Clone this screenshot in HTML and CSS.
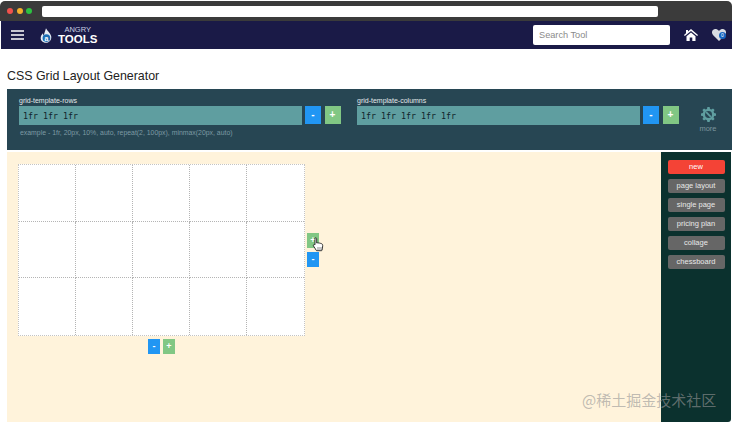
FILE: index.html
```html
<!DOCTYPE html>
<html lang="en">
<head>
<meta charset="utf-8">
<title>CSS Grid Layout Generator</title>
<link rel="stylesheet" href="styles.css">
</head>
<body>
<div class="window">
  <div class="chrome">
    <div class="dots"><span class="dot dot-red"></span><span class="dot dot-yellow"></span><span class="dot dot-green"></span></div>
    <div class="url"></div>
  </div>
  <nav class="nav">
    <svg class="burger" width="13" height="10" viewBox="0 0 13 10"><path d="M0 1h13M0 5h13M0 9h13" stroke="#fff" stroke-width="1.5"/></svg>
    <svg class="logo" width="12" height="15" viewBox="0 0 14 17">
      <path d="M7 0c1 3 5 5 6 9 1 4-2 8-6 8s-7-3-6-7c.5-2 1.500-3 2.500-4 0 1.500.5 2 1 2.500C5 6 6 3 7 0z" fill="#e8eef5"/>
      <circle cx="7.500" cy="11.500" r="4.500" fill="#1f6fb5"/>
      <text x="7.500" y="14.500" class="logo-a" text-anchor="middle">a</text>
    </svg>
    <div class="brand"><span class="brand-top">ANGRY</span><span class="brand-main">TOOLS</span></div>
    <div class="nav-right">
      <input class="search" type="text" placeholder="Search Tool">
      <svg class="home" width="14" height="12" viewBox="0 0 14 12"><path d="M7 0l7 6-.8 1L7 2 .8 7 0 6l2-1.700V1h2v1.600zM2.500 7.200L7 3.400l4.500 3.800V12H8.300V8.500H5.700V12H2.500z" fill="#fff"/></svg>
      <span class="heart-wrap">
        <svg width="14" height="12" viewBox="0 0 14 12"><path d="M7 12L1.200 6.200C-.4 4.500-.4 2.200 1 1 2.500-.4 5-.3 7 2c2-2.300 4.500-2.400 6-1 1.400 1.200 1.400 3.500-.2 5.200z" fill="#d9dde3"/></svg>
        <span class="badge">0</span>
      </span>
    </div>
  </nav>
  <main class="page">
    <h1 class="title">CSS Grid Layout Generator</h1>
    <section class="panel">
      <div class="field">
        <label class="label">grid-template-rows</label>
        <div class="input-row">
          <input class="track-input" type="text" value="1fr 1fr 1fr">
          <button class="btn btn-minus">-</button>
          <button class="btn btn-plus">+</button>
        </div>
        <p class="hint">example - 1fr, 20px, 10%, auto, repeat(2, 100px), minmax(20px, auto)</p>
      </div>
      <div class="field">
        <label class="label">grid-template-columns</label>
        <div class="input-row">
          <input class="track-input" type="text" value="1fr 1fr 1fr 1fr 1fr">
          <button class="btn btn-minus">-</button>
          <button class="btn btn-plus">+</button>
        </div>
      </div>
      <div class="more">
        <svg width="15" height="15" viewBox="0 0 16 16">
          <path d="M6.800 0h2.400l.4 2 1.500.6 1.700-1.100 1.700 1.700-1.100 1.700.6 1.500 2 .4v2.400l-2 .4-.6 1.500 1.100 1.700-1.700 1.700-1.700-1.100-1.500.6-.4 2H6.800l-.4-2-1.500-.6-1.700 1.100-1.700-1.700 1.100-1.700-.6-1.500-2-.4V6.800l2-.4.6-1.500-1.100-1.700 1.700-1.700 1.700 1.100 1.500-.6z" fill="#5f9ea0"/>
          <circle cx="8" cy="8" r="3.700" fill="#274653"/>
          <path d="M5.500 5.500L10.500 10.500" stroke="#5f9ea0" stroke-width="1.800"/>
        </svg>
        <span class="more-text">more</span>
      </div>
    </section>
    <section class="workspace">
      <div class="canvas">
        <div class="stage">
          <div class="grid">
            <div class="cell"></div><div class="cell"></div><div class="cell"></div><div class="cell"></div><div class="cell"></div>
            <div class="cell"></div><div class="cell"></div><div class="cell"></div><div class="cell"></div><div class="cell"></div>
            <div class="cell"></div><div class="cell"></div><div class="cell"></div><div class="cell"></div><div class="cell"></div>
          </div>
          <div class="side-controls">
            <button class="btn btn-small btn-plus">+</button>
            <button class="btn btn-small btn-minus">-</button>
          </div>
        </div>
        <div class="bottom-controls">
          <button class="btn btn-small btn-minus">-</button>
          <button class="btn btn-small btn-plus">+</button>
        </div>
      </div>
      <aside class="sidebar">
        <button class="preset preset-new">new</button>
        <button class="preset">page layout</button>
        <button class="preset">single page</button>
        <button class="preset">pricing plan</button>
        <button class="preset">collage</button>
        <button class="preset">chessboard</button>
      </aside>
    </section>
  </main>
  <svg class="cursor" width="13" height="15" viewBox="0 0 13 15">
    <path d="M3 1c.8-.6 1.700 0 1.700.8V6l1-.2 1 .2 1 .1 1 .3c1.500.3 2 1 2 2.300 0 2-.4 3.500-1 5H4.500L1.500 9c-.6-1 .5-2 1.500-1.200V2z" fill="#fff" stroke="#222" stroke-width=".9"/>
    <path d="M6 10v3M8 10v3M10 10v3" stroke="#444" stroke-width=".6"/>
  </svg>
  <div class="watermark">@稀土掘金技术社区</div>
</div>
</body>
</html>
```
FILE: styles.css
```css
* { box-sizing: border-box; }
html, body { margin: 0; padding: 0; background: #fff; }
body { width: 732px; height: 423px; overflow: hidden; font-family: "Liberation Sans", Arial, sans-serif; }
button, input { font-family: inherit; margin: 0; }

.window { position: relative; width: 732px; height: 423px; display: flex; flex-direction: column; background: #fff; }

.chrome { flex: 0 0 20px; display: flex; align-items: center; background: #3b3b3b; border-radius: 5px 5px 0 0; margin-top: 1px; padding-left: 7px; }
.dots { display: flex; gap: 3.500px; width: 35px; }
.dot { width: 6px; height: 6px; border-radius: 50%; }
.dot-red { background: #f0524c; }
.dot-yellow { background: #f4b02c; }
.dot-green { background: #2dc241; }
.url { width: 616px; height: 11px; background: #fff; border-radius: 2px; }

.nav { flex: 0 0 28px; margin-left: 1px; display: flex; align-items: center; background: #1a1a47; padding-left: 10px; }
.burger { margin-right: 16px; }
.logo { margin-right: 6px; }
.logo-a { font: bold 8px "Liberation Sans", sans-serif; fill: #fff; }
.brand { display: flex; flex-direction: column; align-items: center; line-height: 1; color: #fff; }
.brand-top { font-size: 7.500px; color: #c9cfe0; margin-top: 1px; }
.brand-main { font-size: 11.500px; font-weight: bold; line-height: 11px; }
.nav-right { margin-left: auto; display: flex; align-items: center; }
.search { width: 137px; height: 20px; border: 0; border-radius: 2px; padding: 0 6px; font-size: 9.200px; background: #fff; margin-right: 14px; }
.search::placeholder { color: #8a8a8a; opacity: 1; }
.home { margin-right: 14px; }
.heart-wrap { position: relative; display: flex; width: 17px; margin-right: 3px; }
.badge { position: absolute; left: 7px; top: 3px; width: 7px; height: 7px; border-radius: 50%; background: #1565c0; color: #fff; font-size: 5px; line-height: 7px; text-align: center; }

.page { flex: 1; min-height: 0; display: flex; flex-direction: column; padding-left: 7px; }
.title { margin: 19px 0 5px; font-size: 12.400px; font-weight: normal; line-height: 16px; color: #222; }

.panel { flex: 0 0 61px; display: flex; background: #274653; padding: 8px 0 0 12px; }
.field { width: 338px; }
.field + .field { width: 350px; }
.label { display: block; font-size: 7px; line-height: 8px; color: #e3e8ea; margin-bottom: 1px; }
.input-row { display: flex; align-items: stretch; height: 19px; gap: 3.500px; }
.track-input { width: 282.500px; height: 19px; border: 0; background: #5f9ea0; color: #10242a; padding: 0 4px; font: 8.300px "DejaVu Sans Mono", "Liberation Mono", monospace; }
.btn { border: 0; padding: 0; color: #fff; font-size: 10px; font-weight: bold; line-height: 1; width: 16px; height: 18px; }
.btn-minus { background: #2196f3; }
.btn-plus { background: #81c784; }
.hint { margin: 3px 0 0; padding-left: 1px; font-size: 6.900px; line-height: 9px; color: #7d9aa3; white-space: nowrap; }
.more { display: flex; flex-direction: column; align-items: center; margin-left: -14px; padding-top: 10px; width: 30px; }
.more-text { font-size: 7.500px; line-height: 9px; color: #7e959d; margin-top: 2px; }

.workspace { flex: 0 0 270px; margin-top: 2px; display: flex; margin-right: 1px; }
.canvas { flex: 1; background: #fff3db; padding: 12px 0 0 11px; }
.stage { display: flex; align-items: center; }
.grid { width: 287px; height: 172px; display: grid; grid-template-rows: repeat(3, 1fr); grid-template-columns: repeat(5, 1fr); background: #fff; border: 1px dotted #c4c4c4; }
.cell { border: 1px dotted #b4b4b4; border-width: 0 1px 1px 0; }
.cell:nth-child(5n) { border-right: 0; }
.cell:nth-child(n+11) { border-bottom: 0; }
.side-controls { display: flex; flex-direction: column; gap: 4px; margin-left: 2px; }
.btn-small { display: block; width: 12px; height: 15px; font-size: 9px; }
.bottom-controls { display: flex; gap: 3px; width: 287px; justify-content: center; margin-top: 3px; }

.sidebar { flex: 0 0 70px; background: #0b312e; border-radius: 0 0 3px 0; display: flex; flex-direction: column; align-items: center; gap: 5.500px; padding-top: 8px; }
.preset { width: 57px; height: 13.500px; border: 0; padding: 0; border-radius: 2px; background: #666; color: #e8e8e8; font-size: 7.500px; line-height: 13px; }
.preset-new { background: #f44336; color: #fff; }

.cursor { position: absolute; left: 312px; top: 237px; }
.watermark { position: absolute; left: 582px; top: 389px; font: 15px/21px "Noto Sans CJK SC", sans-serif; color: rgba(150, 150, 150, .62); white-space: nowrap; }
```
